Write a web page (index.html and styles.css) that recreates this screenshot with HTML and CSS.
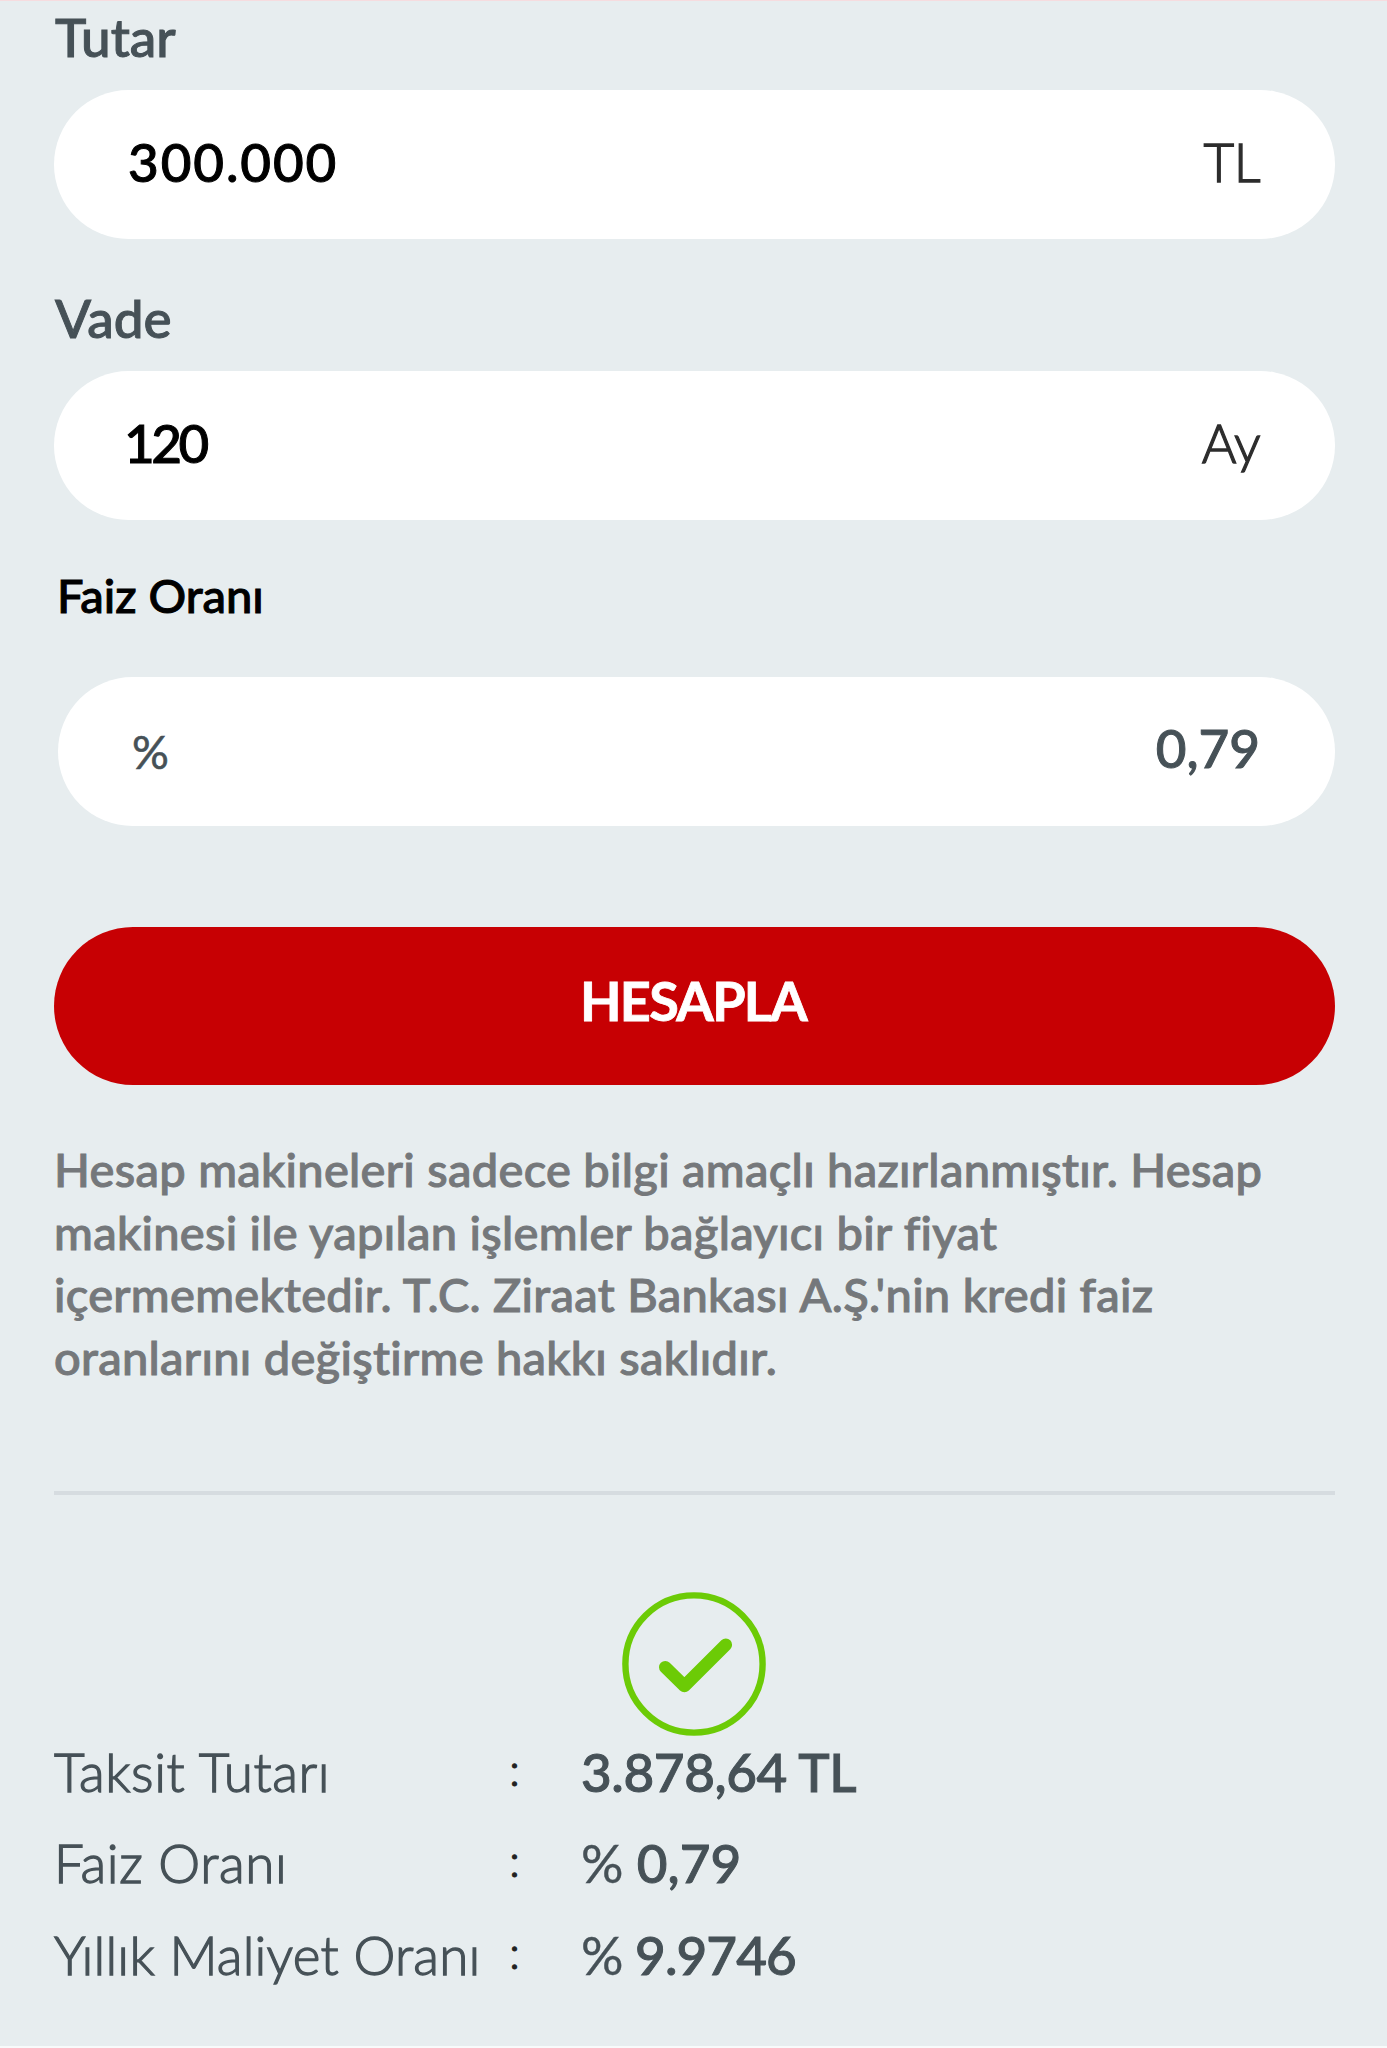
FILE: index.html
```html
<!DOCTYPE html>
<html lang="tr">

<head>
    <meta charset="UTF-8">
    <meta name="viewport" content="width=device-width, initial-scale=1.0">
    <title>Kredi Hesaplama</title>
    <link rel="stylesheet" href="styles.css">
</head>

<body>
    <div class="calculator">
        <div class="label">Tutar</div>
        <div class="field">
            <span class="value">300.000</span>
            <span class="unit">TL</span>
        </div>

        <div class="label">Vade</div>
        <div class="field">
            <span class="value termValue">120</span>
            <span class="unit">Ay</span>
        </div>

        <div class="label rateLabel">Faiz Oranı</div>
        <div class="field rateField">
            <span class="percent">%</span>
            <span class="value rateValue">0,79</span>
        </div>

        <button class="calcBtn">HESAPLA</button>

        <p class="info">Hesap makineleri sadece bilgi amaçlı hazırlanmıştır. Hesap makinesi ile yapılan işlemler bağlayıcı bir fiyat içermemektedir. T.C. Ziraat Bankası A.Ş.'nin kredi faiz oranlarını değiştirme hakkı saklıdır.</p>

        <hr class="divider">

        <svg class="checkIcon" viewBox="0 0 144 144" fill="none">
            <circle cx="72" cy="72" r="68.6" stroke-width="6.4" />
            <path d="M43.3 75.2 L62.4 94 L103.8 52.8" stroke-width="12.6" stroke-linecap="round" stroke-linejoin="round" />
        </svg>

        <div class="results">
            <span class="resultName">Taksit Tutarı</span>
            <span class="colon">:</span>
            <span class="resultValue amount">3.878,64 TL</span>

            <span class="resultName">Faiz Oranı</span>
            <span class="colon">:</span>
            <span class="resultValue"><span class="sign">%</span> 0,79</span>

            <span class="resultName yearlyName">Yıllık Maliyet Oranı</span>
            <span class="colon">:</span>
            <span class="resultValue yearly"><span class="sign">%</span> 9.9746</span>
        </div>
    </div>
</body>

</html>
```
FILE: styles.css
```css
* {
    margin: 0;
    padding: 0;
    box-sizing: border-box;
}

body {
    height: 2048px;
    background-color: #e7edef;
    border-top: 1px solid #f6dcdf;
    border-bottom: 2px solid #f8fafa;
    font-family: Lato, "Open Sans", sans-serif;
    overflow: hidden;
}

.calculator {
    display: flex;
    flex-direction: column;
    padding: 3px 52px 0 54px;
}

.label {
    margin-bottom: 21px;
    padding-left: 1px;
    font-size: 53px;
    font-weight: 500;
    line-height: 65px;
    color: #465157;
    -webkit-text-stroke: 1px;
}

.field {
    display: flex;
    justify-content: space-between;
    align-items: center;
    height: 149px;
    margin-bottom: 46px;
    padding: 0 75px 0 74px;
    border-radius: 75px;
    background-color: #fff;
}

.value {
    padding-bottom: 6px;
    font-size: 53px;
    font-weight: 500;
    letter-spacing: 1.9px;
    color: #000;
    -webkit-text-stroke: 1px;
}

.termValue {
    margin-left: -4px;
    letter-spacing: -3.5px;
}

.unit {
    padding-bottom: 6px;
    font-size: 53px;
    font-weight: 300;
    letter-spacing: -0.5px;
    color: #2d2d2d;
    -webkit-text-stroke: 1.3px;
}

.rateLabel {
    margin: -3px 0 49px 2px;
    font-size: 47px;
    color: #000;
}

.rateField {
    margin: 0 0 101px 4px;
}

.percent {
    font-size: 46px;
    font-weight: 400;
    color: #465157;
    -webkit-text-stroke: 0.6px;
}

.rateValue {
    padding-bottom: 9px;
    letter-spacing: 0;
    color: #465157;
}

.calcBtn {
    height: 158px;
    padding: 0 3px 12px 0;
    border: none;
    border-radius: 80px;
    background-color: #c70003;
    font-family: inherit;
    font-size: 54px;
    font-weight: 700;
    letter-spacing: -1.7px;
    color: #fff;
    -webkit-text-stroke: 0.8px;
}

.info {
    margin-top: 53px;
    font-size: 47px;
    font-weight: 500;
    letter-spacing: 0.3px;
    line-height: 62.7px;
    color: #75787b;
    -webkit-text-stroke: 1px;
}

.divider {
    height: 4px;
    margin-top: 102px;
    border: none;
    background-color: #d6dce0;
}

.checkIcon {
    width: 144px;
    height: 144px;
    margin: 97px 1px 0 0;
    align-self: center;
    stroke: #6ccb06;
}

.results {
    display: grid;
    grid-template-columns: 455px 72px 1fr;
    row-gap: 27.5px;
    margin-top: 4px;
    line-height: 64px;
    color: #465157;
}

.resultName {
    font-size: 53px;
    font-weight: 300;
    letter-spacing: 0.6px;
    -webkit-text-stroke: 1.3px;
}

.yearlyName {
    letter-spacing: 0.2px;
}

.colon {
    font-size: 46px;
    font-weight: 300;
    line-height: 58px;
    color: #222;
    -webkit-text-stroke: 1px;
}

.resultValue {
    font-size: 53px;
    font-weight: 500;
    -webkit-text-stroke: 1px;
}

.sign {
    font-weight: 400;
    -webkit-text-stroke: 0.4px;
}

.amount {
    letter-spacing: -0.4px;
}

.yearly {
    letter-spacing: -0.9px;
}
```
